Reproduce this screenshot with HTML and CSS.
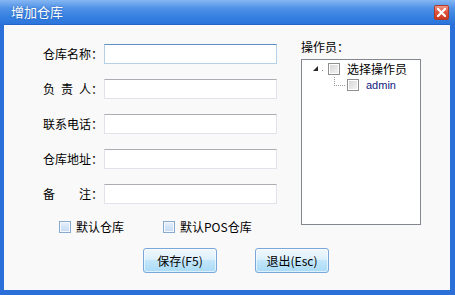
FILE: index.html
```html
<!DOCTYPE html>
<html lang="zh-CN">
<head>
    <meta charset="UTF-8">
    <title>增加仓库</title>
    <link rel="stylesheet" href="styles.css">
</head>
<body>

<div class="window">
    <div class="titlebar">
        <span class="title">增加仓库</span>
        <button class="close-btn">
            <svg width="9" height="9" viewBox="0 0 9 9">
                <path d="M1 1 L8 8 M8 1 L1 8" stroke="#fff" stroke-width="2.2" stroke-linecap="square"/>
            </svg>
        </button>
    </div>

    <div class="frame">
        <div class="content">
            <div class="main">
                <!-- Left side form -->
                <div class="form">
                    <div class="row">
                        <label class="label">仓库名称：</label>
                        <input class="field focused" type="text">
                    </div>
                    <div class="row">
                        <label class="label"><span class="spread"><i>负</i><i>责</i><i>人</i></span>：</label>
                        <input class="field" type="text">
                    </div>
                    <div class="row">
                        <label class="label">联系电话：</label>
                        <input class="field" type="text">
                    </div>
                    <div class="row">
                        <label class="label">仓库地址：</label>
                        <input class="field" type="text">
                    </div>
                    <div class="row">
                        <label class="label"><span class="spread"><i>备</i><i>注</i></span>：</label>
                        <input class="field" type="text">
                    </div>
                    <div class="check-row">
                        <label class="check-item"><span class="check"></span>默认仓库</label>
                        <label class="check-item"><span class="check"></span>默认POS仓库</label>
                    </div>
                </div>

                <!-- Operators tree -->
                <div class="operators">
                    <div class="op-label"><span class="spread short"><i>操</i><i>作</i><i>员</i></span>：</div>
                    <div class="tree">
                        <div class="tree-row">
                            <svg class="expander" width="15" height="8" viewBox="0 0 15 8">
                                <path d="M5 1 L5 6 L0 6 Z" fill="#262626"/>
                                <rect x="9" y="5" width="1" height="1" fill="#8a8a8a"/>
                            </svg>
                            <span class="tree-check"></span>
                            <span class="tree-text">选择操作员</span>
                        </div>
                        <div class="tree-row child">
                            <span class="connector"></span>
                            <span class="tree-check"></span>
                            <span class="tree-text user">admin</span>
                        </div>
                    </div>
                </div>
            </div>

            <div class="buttons">
                <button class="btn">保存(F5)</button>
                <button class="btn">退出(Esc)</button>
            </div>
        </div>
    </div>
</div>

</body>
</html>
```

FILE: styles.css
```css
/* Basic styling */
body {
    margin: 0;
    width: 455px;
    height: 295px;
    overflow: hidden;
    font-family: "Noto Sans CJK SC", "Liberation Sans", sans-serif;
    font-size: 12px;
    color: #000;
}

.window {
    display: flex;
    flex-direction: column;
    height: 295px;
    background-color: #2b70d8;
}

/* Title bar */
.titlebar {
    height: 24px;
    flex-shrink: 0;
    display: flex;
    align-items: center;
    justify-content: space-between;
    padding: 0 6px 0 11px;
    background: linear-gradient(#86b7f2, #4f91e7 35%, #3580e0 70%, #2c74dc);
}

.title {
    color: #fff;
    font-size: 13px;
    line-height: 16px;
    text-shadow: 0 0 2px rgba(20, 60, 140, 0.6);
}

.close-btn {
    width: 15px;
    height: 15px;
    padding: 0;
    margin-top: 1px;
    border: 1px solid #b03a2a;
    border-radius: 2px;
    background: linear-gradient(#f09a8a, #e0553f 45%, #cc3a22);
    display: flex;
    align-items: center;
    justify-content: center;
}

/* Window frame */
.frame {
    flex: 1;
    display: flex;
    padding: 0 5px 5px 4px;
}

.content {
    flex: 1;
    background-color: #f9f9f9;
    border-top: 1px solid #2466c8;
}

.main {
    display: flex;
    align-items: flex-start;
}

/* Form */
.form {
    padding: 19px 0 0 39px;
}

.row {
    display: flex;
    align-items: center;
    height: 20px;
    margin-bottom: 15px;
}

.row:last-of-type {
    margin-bottom: 0;
}

.label {
    width: 61px;
    line-height: 14px;
    display: flex;
}

.spread {
    width: 48px;
    display: flex;
    justify-content: space-between;
}

.spread.short {
    width: 36px;
}

.spread i {
    font-style: normal;
}

.field {
    width: 173px;
    height: 20px;
    box-sizing: border-box;
    margin: 0;
    padding: 0 3px;
    background-color: #fff;
    border: 1px solid #e2e3ea;
    border-top-color: #abadb3;
    outline: none;
}

.field.focused {
    border-color: #b5cfe7;
    border-top-color: #5c8fc2;
}

.check-row {
    display: flex;
    align-items: center;
    height: 14px;
    margin-top: 16px;
    padding-left: 16px;
}

.check-item {
    display: flex;
    align-items: center;
    width: 104px;
    line-height: 14px;
}

.check {
    width: 12px;
    height: 12px;
    box-sizing: border-box;
    margin-right: 5px;
    border: 1px solid #8aa9cf;
    background: linear-gradient(#e6effa, #c4daf2);
    box-shadow: inset 0 0 0 1px #f4f8fd;
}

/* Operators */
.operators {
    margin-left: 24px;
    padding-top: 15px;
}

.op-label {
    display: flex;
    line-height: 14px;
}

.tree {
    width: 120px;
    height: 166px;
    box-sizing: border-box;
    margin-top: 5px;
    padding-top: 1px;
    background-color: #fff;
    border: 1px solid #828790;
}

.tree-row {
    display: flex;
    align-items: center;
    height: 16px;
    padding-left: 11px;
}

.tree-row.child {
    padding-left: 32px;
}

.expander {
    display: block;
}

.tree-check {
    width: 12px;
    height: 12px;
    box-sizing: border-box;
    margin-right: 7px;
    border: 1px solid #8f8f8f;
    background: linear-gradient(135deg, #d4d4d4, #f6f6f6);
    box-shadow: inset 0 0 0 1px #fff;
}

.connector {
    align-self: flex-start;
    width: 11px;
    height: 9px;
    margin-right: 2px;
    border-left: 1px dotted #9a9a9a;
    border-bottom: 1px dotted #9a9a9a;
    box-sizing: border-box;
}

.tree-text {
    line-height: 14px;
    white-space: nowrap;
}

.tree-text.user {
    color: #0f2080;
    font-family: "Liberation Sans", sans-serif;
    font-size: 11px;
}

/* Buttons */
.buttons {
    display: flex;
    gap: 38px;
    margin-top: 14px;
    padding-left: 139px;
}

.btn {
    width: 74px;
    height: 25px;
    padding: 0;
    font-family: "Noto Sans CJK SC", "Liberation Sans", sans-serif;
    font-size: 12px;
    color: #000;
    border: 1px solid #7aa7d8;
    border-radius: 3px;
    background: linear-gradient(#f1f8fd, #dcf0fc 45%, #c3e6fa 50%, #a9dbf7);
    box-shadow: inset 0 0 0 1px rgba(255, 255, 255, 0.6);
}
```
